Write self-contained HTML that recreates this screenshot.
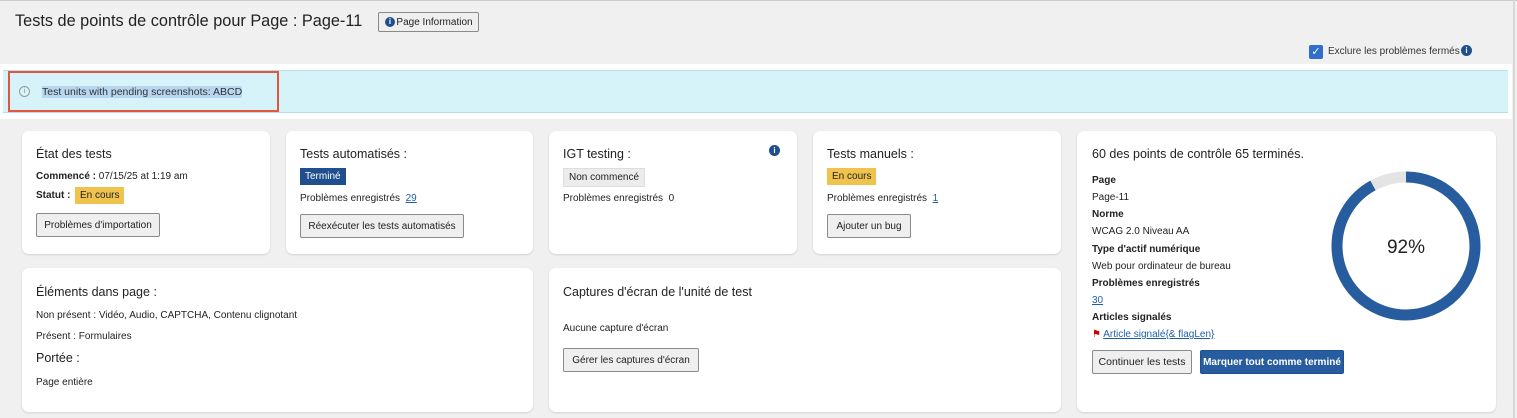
<!DOCTYPE html><html><head><style>
body{margin:0;width:1517px;height:418px;background:#f0f0f0;font-family:"Liberation Sans",sans-serif;color:#222;position:relative;overflow:hidden;font-size:10px}
.a{position:absolute}
.card{position:absolute;background:#fff;border-radius:7px;box-shadow:0 1px 2px rgba(0,0,0,.12)}
.h{position:absolute;font-size:12.5px;color:#222}
.btn{position:absolute;background:#efefef;border:1px solid #8a8a8a;border-radius:2px;font-size:10px;box-sizing:border-box;color:#222;display:flex;align-items:center;justify-content:center;white-space:nowrap}
.b{font-weight:bold}
.lnk{color:#1f5fa8;text-decoration:underline}
.badge{position:absolute;font-size:10px;padding:0 5px;line-height:17px}
</style></head><body>
<div class="a" style="left:0;top:0;width:1517px;height:1px;background:#ccc"></div>
<div class="a" style="left:1513px;top:0;width:2px;height:418px;background:#d8d8d8"></div>
<div class="a" style="left:15px;top:12px;font-size:16.3px">Tests de points de contrôle pour Page : Page-11</div>
<div class="btn" style="left:378px;top:12px;width:101px;height:20px;padding-left:12px">Page Information</div>
<div class="a" style="left:385px;top:17px;width:10px;height:10px;border-radius:50%;background:#1f4f8f;color:#fff;font-size:8px;line-height:10px;text-align:center;font-weight:bold">i</div>
<div class="a" style="left:1309px;top:45px;width:14px;height:14px;background:#2f6fcb;border-radius:2px;color:#fff;font-size:11px;line-height:14px;text-align:center">✓</div>
<div class="a" style="left:1328px;top:46px;font-size:10px;color:#333">Exclure les problèmes fermés</div>
<div class="a" style="left:1461px;top:45px;width:11px;height:11px;border-radius:50%;background:#1f4f8f;color:#fff;font-size:8px;line-height:11px;text-align:center;font-weight:bold">i</div>
<div class="a" style="left:0;top:64px;width:1512px;height:55px;background:#fff"></div>
<div class="a" style="left:3px;top:70px;width:1505px;height:43px;background:#d5f3f8;border-top:1px solid #b8dfe6;border-bottom:1px solid #b8dfe6;box-sizing:border-box"></div>
<div class="a" style="left:8px;top:71px;width:271px;height:41px;border:2px solid #e4553e;box-sizing:border-box"></div>
<div class="a" style="left:19px;top:86px;width:11px;height:11px;border:1px solid #999;border-radius:50%;box-sizing:border-box;font-size:7px;line-height:9px;text-align:center;color:#888">i</div>
<div class="a" style="left:42px;top:86px;font-size:10.5px;background:#b8d6ef;color:#333">Test units with pending screenshots: ABCD</div>

<div class="card" style="left:22px;top:131px;width:248px;height:123px">
<div class="h" style="left:14px;top:16px">État des tests</div>
<div class="a b" style="left:14px;top:40px">Commencé : <span style="font-weight:normal">07/15/25 at 1:19 am</span></div>
<div class="a b" style="left:14px;top:59px">Statut :</div>
<div class="badge" style="left:53px;top:56px;background:#f0c34e">En cours</div>
<div class="btn" style="left:14px;top:82px;width:124px;height:24px">Problèmes d'importation</div>
</div>
<div class="card" style="left:286px;top:131px;width:247px;height:123px">
<div class="h" style="left:14px;top:16px">Tests automatisés :</div>
<div class="badge" style="left:14px;top:37px;background:#1f4f8f;color:#fff">Terminé</div>
<div class="a" style="left:14px;top:62px">Problèmes enregistrés &nbsp;<span class="lnk">29</span></div>
<div class="btn" style="left:14px;top:83px;width:164px;height:24px">Réexécuter les tests automatisés</div>
</div>
<div class="card" style="left:549px;top:131px;width:248px;height:123px">
<div class="h" style="left:14px;top:16px">IGT testing :</div>
<div class="a" style="left:220px;top:14px;width:11px;height:11px;border-radius:50%;background:#1f4f8f;color:#fff;font-size:8px;line-height:11px;text-align:center;font-weight:bold">i</div>
<div class="badge" style="left:14px;top:37px;background:#ececec;border:1px solid #ddd">Non commencé</div>
<div class="a" style="left:14px;top:62px">Problèmes enregistrés &nbsp;0</div>
</div>
<div class="card" style="left:813px;top:131px;width:248px;height:123px">
<div class="h" style="left:14px;top:16px">Tests manuels :</div>
<div class="badge" style="left:14px;top:37px;background:#f0c34e">En cours</div>
<div class="a" style="left:14px;top:62px">Problèmes enregistrés &nbsp;<span class="lnk">1</span></div>
<div class="btn" style="left:14px;top:83px;width:84px;height:24px">Ajouter un bug</div>
</div>
<div class="card" style="left:22px;top:268px;width:511px;height:144px">
<div class="h" style="left:14px;top:17px">Éléments dans page :</div>
<div class="a" style="left:14px;top:42px">Non présent : Vidéo, Audio, CAPTCHA, Contenu clignotant</div>
<div class="a" style="left:14px;top:63px">Présent : Formulaires</div>
<div class="h" style="left:14px;top:83px">Portée :</div>
<div class="a" style="left:14px;top:109px">Page entière</div>
</div>
<div class="card" style="left:549px;top:268px;width:512px;height:144px">
<div class="h" style="left:14px;top:17px">Captures d'écran de l'unité de test</div>
<div class="a" style="left:14px;top:55px">Aucune capture d'écran</div>
<div class="btn" style="left:14px;top:80px;width:136px;height:24px">Gérer les captures d'écran</div>
</div>
<div class="card" style="left:1077px;top:131px;width:419px;height:281px">
<div class="h" style="left:15px;top:16px">60 des points de contrôle 65 terminés.</div>
<div class="a b" style="left:15px;top:44px">Page</div>
<div class="a" style="left:15px;top:61px">Page-11</div>
<div class="a b" style="left:15px;top:78px">Norme</div>
<div class="a" style="left:15px;top:95px">WCAG 2.0 Niveau AA</div>
<div class="a b" style="left:15px;top:113px">Type d'actif numérique</div>
<div class="a" style="left:15px;top:130px">Web pour ordinateur de bureau</div>
<div class="a b" style="left:15px;top:147px">Problèmes enregistrés</div>
<div class="a lnk" style="left:15px;top:164px">30</div>
<div class="a b" style="left:15px;top:181px">Articles signalés</div>
<div class="a" style="left:15px;top:198px"><span style="color:#c00">⚑</span> <span class="lnk">Article signalé{&amp; flagLen}</span></div>
<div class="btn" style="left:15px;top:219px;width:100px;height:24px;font-size:10.5px">Continuer les tests</div>
<div class="btn" style="left:123px;top:219px;width:144px;height:24px;background:#275d9e;border-color:#1f4f8f;color:#fff;font-weight:bold">Marquer tout comme terminé</div>
<svg class="a" style="left:254px;top:40px" width="150" height="150" viewBox="0 0 150 150">
<circle cx="75" cy="75" r="69" fill="none" stroke="#e4e4e4" stroke-width="11"/>
<circle cx="75" cy="75" r="69" fill="none" stroke="#275d9e" stroke-width="11" stroke-dasharray="398.9 433.5" transform="rotate(-90 75 75)"/>
<text x="75" y="82" text-anchor="middle" font-size="19" font-family="Liberation Sans" fill="#222">92%</text>
</svg>
</div>
</body></html>
